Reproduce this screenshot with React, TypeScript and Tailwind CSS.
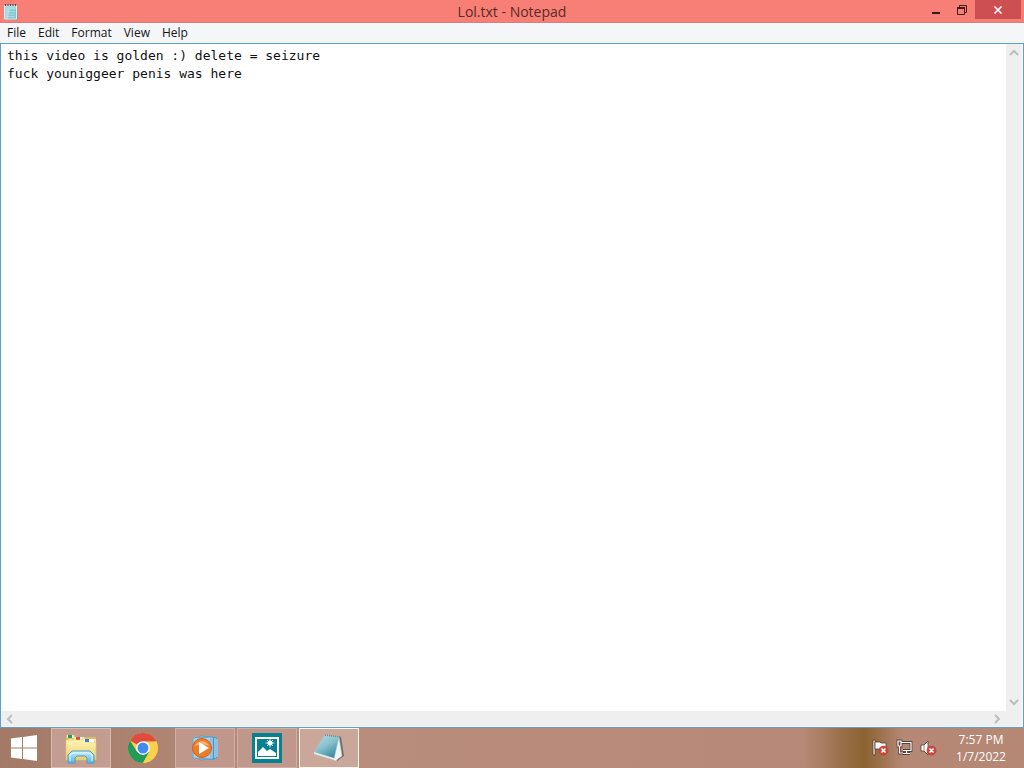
import React, { useState } from "react";

const menus = ["File", "Edit", "Format", "View", "Help"];

function NotepadSmallIcon() {
  return (
    <svg width="16" height="18" viewBox="0 0 16 18" aria-hidden="true">
      <path d="M2 2.500h12l.8 13.800H2.800z" fill="#6f9a9c" />
      <path d="M1.500 2.500h12v13.500h-12z" fill="#a5dce1" stroke="#d9eff0" />
      <path d="M7 6h6v9.500H5z" fill="#79bac6" opacity=".65" />
      <path d="M3 6h9M3 8.500h9M3 11h9M3 13.500h9" stroke="#c5eef0" strokeWidth=".5" />
      <path d="M2.500 1v2M5 1v2M7.500 1v2M10 1v2M12.500 1v2" stroke="#51484a" strokeWidth="1.200" />
    </svg>
  );
}

function Chevron({ d }: { d: string }) {
  return (
    <svg width="10" height="10" viewBox="0 0 10 10" fill="none" stroke="#bcbcc2" strokeWidth="2" aria-hidden="true">
      <path d={d} />
    </svg>
  );
}

function WindowsLogo() {
  return (
    <svg width="28" height="28" viewBox="0 0 28 28" fill="#fff" aria-hidden="true">
      <path d="M1 4.500 12 3v10.500H1zM13 2.900 27 1v12.500H13zM1 14.500h11V25L1 23.500zM13 14.500h14V27l-14-1.900z" />
    </svg>
  );
}

function ExplorerIcon() {
  return (
    <svg width="34" height="32" viewBox="0 0 34 32" aria-hidden="true">
      <defs>
        <linearGradient id="folder" x1="0" y1="0" x2="0" y2="1">
          <stop offset="0" stopColor="#fff5b5" />
          <stop offset="1" stopColor="#eccd68" />
        </linearGradient>
        <linearGradient id="stand" x1="0" y1="0" x2="0" y2="1">
          <stop offset="0" stopColor="#c8ecfb" />
          <stop offset="1" stopColor="#55b5e5" />
        </linearGradient>
      </defs>
      <path d="M2 3h9l1 2h20v22H2z" fill="#d7bd63" />
      <path d="M3 3h7v3H3z" fill="#f5ecbb" />
      <path d="M4 3h4v3H4z" fill="#2b9c55" />
      <path d="M10 5h10l1 2h11v20H4V7h6z" fill="#f7e9a0" />
      <path d="M11 5h7v3h-7z" fill="#fff" />
      <path d="M12 5h4v3h-4z" fill="#d8503b" />
      <path d="M2 8h17l2 2h11v18H2z" fill="url(#folder)" stroke="#e0c466" strokeWidth=".6" />
      <path d="M20 7h10v3H20z" fill="#fff" />
      <path d="M21 7h4v3h-4z" fill="#3586bb" />
      <path d="M4 31v-8l4-4h18l4 4v8h-7v-5l-2-2h-8l-2 2v5z" fill="url(#stand)" stroke="#4b9fc9" />
      <path d="M6 29v-6l3-2h16l3 2v6" stroke="#e5f8ff" fill="none" />
    </svg>
  );
}

function ChromeIcon() {
  return (
    <svg width="30" height="30" viewBox="0 0 48 48" aria-hidden="true">
      <circle cx="24" cy="24" r="24" fill="#fbd04b" />
      <path d="M24 24 3.200 12A24 24 0 0 1 44.800 12z" fill="#df4c3e" />
      <path d="M3.200 12A24 24 0 0 0 24 48L34.400 30 24 34 14 29z" fill="#229b58" />
      <path d="M24 13h20.800A24 24 0 0 1 24 48l10-18z" fill="#fbd04b" />
      <path d="M24 13h20.800V12L42 9H16z" fill="#df4c3e" />
      <circle cx="24" cy="24" r="11" fill="#fff" />
      <circle cx="24" cy="24" r="8.800" fill="#438bf2" />
    </svg>
  );
}

function MediaPlayerIcon() {
  return (
    <svg width="30" height="30" viewBox="0 0 30 30" aria-hidden="true">
      <path d="m12 3 13 1 3 2v18l-4 3-12-1z" fill="#5099cb" />
      <path d="m10 3 13 1v22l-13 1z" fill="#b9e2f7" stroke="#4c91bd" strokeWidth=".8" />
      <path d="M25 5v20M27 6v18" stroke="#c7eafa" />
      <path d="m3 5 18-1v22L3 25z" fill="#a6d3eb" stroke="#68a9cf" />
      <circle cx="12" cy="15" r="9.500" fill="#ed7c26" stroke="#cf6421" />
      <path d="M5 13a7.500 7.500 0 0 1 14 0q-6-3-14 0z" fill="#f9b36f" />
      <path d="m9 9 10 6-10 6z" fill="#fff" />
    </svg>
  );
}

function PhotosIcon() {
  return (
    <svg width="30" height="30" viewBox="0 0 30 30" aria-hidden="true">
      <path d="M0 0h30v30H0z" fill="#078092" />
      <path d="M4 5h22v20H4z" fill="none" stroke="#fff" strokeWidth="2" />
      <path d="m6 19 5-5 4 4 3-2 6 4v3H6z" fill="#fff" />
      <circle cx="18" cy="10" r="2.500" fill="#fff" />
      <path d="M18 5.500v9M13.500 10h9M15 7l6 6M21 7l-6 6" stroke="#fff" strokeWidth=".8" />
    </svg>
  );
}

function NotepadLargeIcon() {
  return (
    <svg width="32" height="30" viewBox="0 0 32 30" aria-hidden="true">
      <defs>
        <linearGradient id="cover" x1="0" y1="0" x2=".6" y2="1">
          <stop offset="0" stopColor="#b4dde3" />
          <stop offset=".5" stopColor="#8bc4d0" />
          <stop offset="1" stopColor="#3a8ba2" />
        </linearGradient>
      </defs>
      <path d="m26 3 2 1 3 19-7 5z" fill="#6f6b61" />
      <path d="m26 4 3 19-7 5-2-2z" fill="#eff4f0" stroke="#b9c4c0" strokeWidth=".5" />
      <path d="m12 2 14 2-5 22L1 20z" fill="url(#cover)" stroke="#a9d2d8" strokeWidth=".5" />
      <path d="m1 19 20 6v2L1 21z" fill="#dfe9e7" />
      <path d="m12 2 15 2" stroke="#7d8783" strokeWidth="1.500" strokeDasharray="1 1" />
    </svg>
  );
}

function ErrorBadge() {
  return (
    <g>
      <circle cx="11.500" cy="11.500" r="4.500" fill="#d6443f" stroke="#a93732" strokeWidth=".5" />
      <path d="m9.500 9.500 4 4m0-4-4 4" stroke="#fff" strokeWidth="1.500" />
    </g>
  );
}

function FlagIcon() {
  return (
    <svg width="18" height="18" viewBox="0 0 18 18" aria-hidden="true">
      <path d="M1 1h2v15H1z" fill="#fff" stroke="#55382e" strokeWidth=".8" />
      <path d="M3 3h5l1 1h5v7H9l-1-1H3z" fill="#fff" stroke="#55382e" strokeWidth=".8" />
      <ErrorBadge />
    </svg>
  );
}

function NetworkIcon() {
  return (
    <svg width="18" height="18" viewBox="0 0 18 18" fill="none" aria-hidden="true">
      <path d="M5 3.500h10v8H7M10.500 12v2M7 14.500h7M3.500 7v7H7M2 2h3v5H2z" stroke="#5d4138" strokeWidth="2.800" />
      <path d="M5 3.500h10v8H7M10.500 12v2M7 14.500h7M3.500 7v7H7M2 2h3v5H2z" stroke="#fff" strokeWidth="1.200" />
    </svg>
  );
}

function VolumeIcon() {
  return (
    <svg width="18" height="18" viewBox="0 0 18 18" aria-hidden="true">
      <path d="M1 6h3l4-4v14l-4-4H1z" fill="#fff" stroke="#55382e" strokeWidth=".8" />
      <path d="M4 6v6" stroke="#a38478" />
      <ErrorBadge />
    </svg>
  );
}

const apps = [
  { name: "File Explorer", icon: <ExplorerIcon />, style: "border-[#d8bdb1] bg-[#c39e90]" },
  { name: "Google Chrome", icon: <ChromeIcon />, style: "border-transparent" },
  { name: "Windows Media Player", icon: <MediaPlayerIcon />, style: "border-[#d0b0a5] bg-[#bf988b]" },
  { name: "Photos", icon: <PhotosIcon />, style: "border-[#d0b0a5] bg-[#bf988b]" },
  { name: "Notepad", icon: <NotepadLargeIcon />, style: "border-[#fff5ef] bg-[#c9a79b]" },
];

export default function App() {
  const [text, setText] = useState(
    "this video is golden :) delete = seizure\nfuck youniggeer penis was here",
  );

  return (
    <div className="flex h-screen flex-col overflow-hidden bg-white font-['Open_Sans','Noto_Sans',sans-serif]">
      <header className="grid h-[23px] shrink-0 grid-cols-[1fr_auto_1fr] border-b border-[#c9847e] bg-[#f87f75]">
        <div className="flex items-center pl-[3px]">
          <NotepadSmallIcon />
        </div>
        <h1 className="text-[14px] leading-[23px] text-[#592b28]">Lol.txt - Notepad</h1>
        <div className="flex items-start justify-end pr-[3px]">
          <button aria-label="Minimize" className="flex h-[19px] w-[26px] items-center justify-center">
            <svg width="10" height="10" viewBox="0 0 10 10" aria-hidden="true">
              <path d="M1 7h8v2H1z" fill="#321c19" />
            </svg>
          </button>
          <button aria-label="Restore" className="flex h-[19px] w-[26px] items-center justify-center">
            <svg width="12" height="12" viewBox="0 0 12 12" fill="none" stroke="#421e1b" aria-hidden="true">
              <path d="M3.500 3V1.500h7v7H9M1.500 4v6.500h7V4" />
              <path d="M1 4h8" strokeWidth="2" />
            </svg>
          </button>
          <button aria-label="Close" className="flex h-[19px] w-[46px] items-center justify-center bg-[#cd4f51]">
            <svg width="10" height="10" viewBox="0 0 10 10" stroke="#fff" strokeWidth="1.600" aria-hidden="true">
              <path d="m1.500 1.500 7 7m0-7-7 7" />
            </svg>
          </button>
        </div>
      </header>

      <nav aria-label="Menu bar" className="flex h-5 shrink-0 gap-3 bg-[#f5f6f7] px-[7px]">
        {menus.map((menu) => (
          <button key={menu} className="text-[12px] leading-5 text-[#151515]">
            {menu}
          </button>
        ))}
      </nav>

      <main className="min-h-0 flex-1 border border-[#5f9fc9] bg-[#f5f6f7] pr-[2px] pb-px">
        <div className="grid h-full grid-cols-[1fr_15px] grid-rows-[1fr_15px] bg-[#efeff0]">
          <textarea
            aria-label="Document text"
            spellCheck={false}
            value={text}
            onChange={(event) => setText(event.target.value)}
            className="block h-full w-full resize-none overflow-hidden whitespace-pre bg-white px-1.5 py-[3px] font-['DejaVu_Sans_Mono','Liberation_Mono',monospace] text-[13px] leading-[18px] text-[#111] outline-none"
          />
          <div className="flex flex-col items-center justify-between py-1">
            <button aria-label="Scroll up"><Chevron d="m1 7 4-4 4 4" /></button>
            <button aria-label="Scroll down"><Chevron d="m1 3 4 4 4-4" /></button>
          </div>
          <div className="flex items-center justify-between px-1">
            <button aria-label="Scroll left"><Chevron d="M7 1 3 5l4 4" /></button>
            <button aria-label="Scroll right"><Chevron d="m3 1 4 4-4 4" /></button>
          </div>
        </div>
      </main>

      <footer className="flex h-10 shrink-0 items-center justify-between bg-linear-to-r from-[#a27a67] via-[#b98d7d] via-30% to-[#b58775]">
        <div className="flex">
          <button aria-label="Start" className="flex h-10 w-[51px] items-center justify-center pr-[3px]">
            <WindowsLogo />
          </button>
          <div className="flex gap-[2px]">
            {apps.map((app) => (
              <button
                key={app.name}
                aria-label={app.name}
                className={`flex h-10 w-15 items-center justify-center border ${app.style}`}
              >
                {app.icon}
              </button>
            ))}
          </div>
        </div>
        <div className="flex h-10 items-center">
          <div className="h-10 w-[100px] bg-linear-to-r from-transparent via-[#8a6230] via-60% to-transparent" />
          <div className="-ml-8 flex items-center gap-1.5">
            <button aria-label="Action Center"><FlagIcon /></button>
            <button aria-label="Network"><NetworkIcon /></button>
            <button aria-label="Volume"><VolumeIcon /></button>
          </div>
          <button className="w-[86px] text-center text-[12px] leading-[17px] text-white">
            <span className="block">7:57 PM</span>
            <span className="block">1/7/2022</span>
          </button>
        </div>
      </footer>
    </div>
  );
}
